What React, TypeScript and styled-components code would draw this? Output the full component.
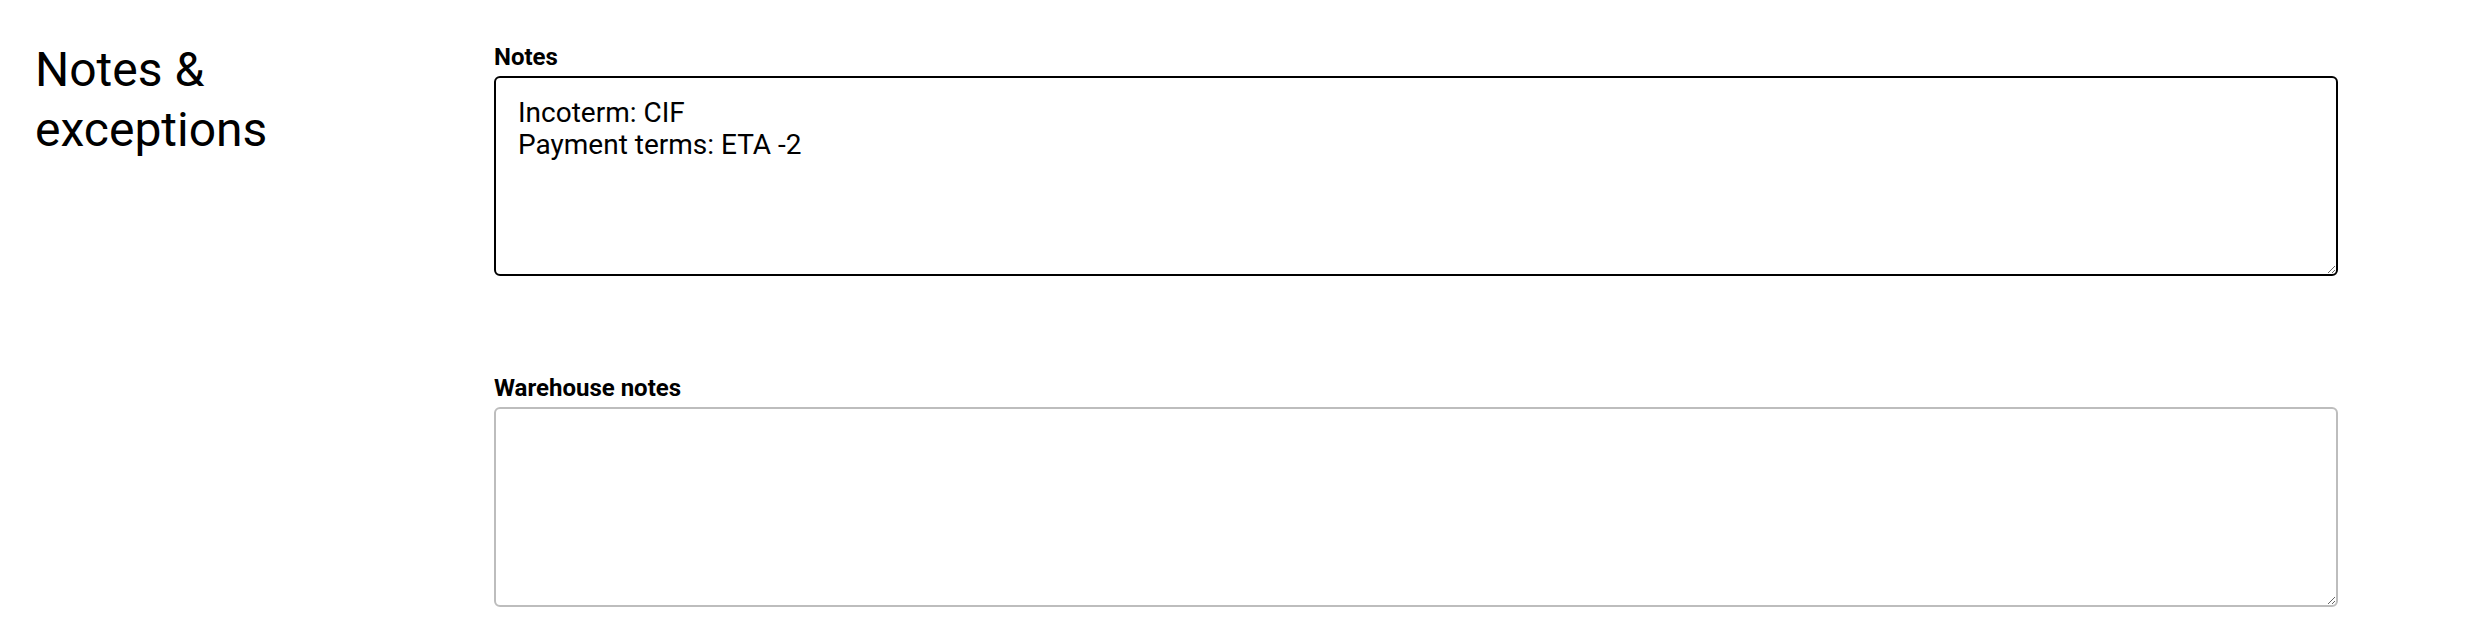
import styled, { createGlobalStyle } from 'styled-components';

const GlobalStyle = createGlobalStyle`
  body {
    margin: 0;
    background: #fff;
    color: #000;
    font-family: Roboto, "Liberation Sans", Arial, sans-serif;
  }
`;

const Section = styled.section`
  display: grid;
  grid-template-columns: 459px 1844px;
  padding: 40px 0 0 35px;
`;

const Heading = styled.h2`
  margin: 0;
  font-size: 48px;
  font-weight: 400;
  line-height: 60px;
  width: 300px;
`;

const Fields = styled.div`
  display: flex;
  flex-direction: column;
  gap: 98px;
  padding-top: 3px;
`;

const Field = styled.label`
  display: flex;
  flex-direction: column;
  gap: 5px;
`;

const FieldLabel = styled.span`
  font-size: 24px;
  font-weight: 700;
  line-height: 28px;
`;

const TextArea = styled.textarea<{ $active?: boolean }>`
  box-sizing: border-box;
  width: 100%;
  height: 200px;
  margin: 0;
  padding: 19px 22px;
  border: 2px solid ${(p) => (p.$active ? '#000' : '#bdbdbd')};
  border-radius: 6px;
  font-family: Roboto, "Liberation Sans", Arial, sans-serif;
  font-size: 28px;
  line-height: 32px;
  color: #000;
  background: #fff;
  outline: none;
  resize: vertical;
`;

const App = () => {
  return (
    <>
      <GlobalStyle />
      <Section>
        <Heading>Notes &amp; exceptions</Heading>
        <Fields>
          <Field>
            <FieldLabel>Notes</FieldLabel>
            <TextArea $active defaultValue={'Incoterm: CIF\nPayment terms: ETA -2'} />
          </Field>
          <Field>
            <FieldLabel>Warehouse notes</FieldLabel>
            <TextArea />
          </Field>
        </Fields>
      </Section>
    </>
  );
};

export default App;
